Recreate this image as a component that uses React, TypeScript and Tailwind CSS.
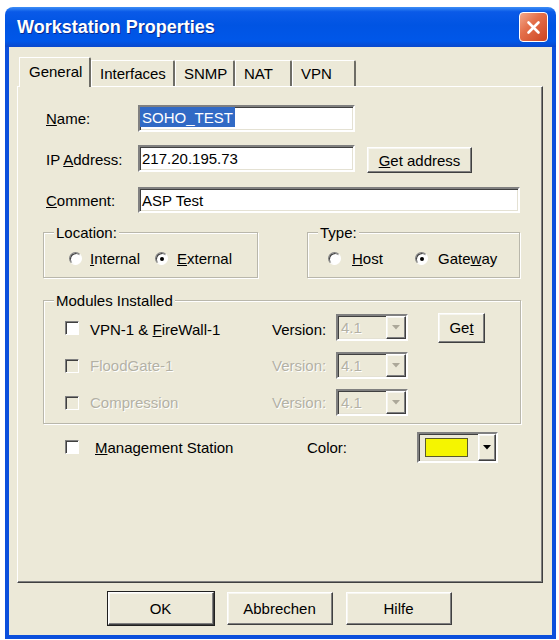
import React from "react";

const sunken =
  "border-2 border-t-[#808080] border-l-[#808080] border-r-white border-b-white shadow-[inset_1px_1px_0_#404040,inset_-1px_-1px_0_#e4e1d3]";
const raised =
  "border border-t-white border-l-white border-r-[#404040] border-b-[#404040] shadow-[inset_-1px_-1px_0_#808080,inset_1px_1px_0_#f7f6f0]";
const disabledText = "text-[#b3b1a5] [text-shadow:1px_1px_0_#ffffff]";

function Radio({ checked }: { checked?: boolean }) {
  return (
    <span className="inline-flex shrink-0 items-center justify-center w-[13px] h-[13px] rounded-full bg-white border border-t-[#808080] border-l-[#808080] border-r-white border-b-white shadow-[inset_1px_1px_0_#404040]">
      {checked && <span className="w-[4px] h-[4px] rounded-full bg-black" />}
    </span>
  );
}

function Check({ disabled }: { disabled?: boolean }) {
  return (
    <span
      className={`inline-block shrink-0 w-[14px] h-[14px] border border-t-[#808080] border-l-[#808080] border-r-white border-b-white shadow-[inset_1px_1px_0_#404040] ${
        disabled ? "bg-[#ECE9D8]" : "bg-white"
      }`}
    />
  );
}

function Arrow({ color }: { color: string }) {
  return (
    <svg width="8" height="5" viewBox="0 0 8 5">
      <polygon points="0,0 8,0 4,4.5" fill={color} />
    </svg>
  );
}

function VersionCombo() {
  return (
    <div className={`w-[72px] h-[27px] flex bg-[#ECE9D8] ${sunken}`}>
      <span className={`flex-1 flex items-center pl-[3px] ${disabledText}`}>4.1</span>
      <span className={`w-[20px] flex items-center justify-center bg-[#ECE9D8] ${raised}`}>
        <Arrow color="#aca899" />
      </span>
    </div>
  );
}

function Button({
  children,
  className = "",
  isDefault,
}: {
  children: React.ReactNode;
  className?: string;
  isDefault?: boolean;
}) {
  return (
    <div
      className={`flex items-center justify-center bg-[#ECE9D8] ${
        isDefault ? "outline outline-1 outline-[#202020]" : ""
      } ${raised} ${className}`}
    >
      {children}
    </div>
  );
}

function Tab({
  label,
  width,
  selected,
}: {
  label: string;
  width: string;
  selected?: boolean;
}) {
  return (
    <div
      className={`${width} flex items-center pl-[8px] bg-[#ECE9D8] rounded-tr-[2px] border-t border-l border-t-white border-l-white border-r-2 border-r-[#6e6d66] ${
        selected ? "h-[30px] -mb-[1px] relative z-10 pl-[9px] pb-[2px]" : "h-[26px]"
      }`}
    >
      {label}
    </div>
  );
}

function GroupBox({
  title,
  className = "",
  children,
}: {
  title: string;
  className?: string;
  children: React.ReactNode;
}) {
  return (
    <div
      className={`flex flex-col border border-[#b9b7ab] shadow-[inset_1px_1px_0_#ffffff,1px_1px_0_#ffffff] ${className}`}
    >
      <span className="-mt-[9px] ml-[10px] px-[2px] w-fit h-[17px] leading-[17px] bg-[#ECE9D8]">
        {title}
      </span>
      {children}
    </div>
  );
}

export default function App() {
  return (
    <div className="w-[559px] h-[640px] bg-white pt-[7px] pl-[5px] [font-family:'Liberation_Sans',Arial,sans-serif] text-[15px] leading-none text-black">
      <div className="w-[551px] h-[632px] flex flex-col rounded-t-[8px] overflow-hidden">
        {/* title bar */}
        <div className="h-[40px] shrink-0 flex items-center justify-between pl-[12px] pr-[8px] bg-[linear-gradient(180deg,#3d8ef6_0%,#0a5ae8_12%,#0054e3_45%,#0057e9_85%,#0a48cc_100%)]">
          <span className="text-white font-bold text-[18px] [text-shadow:1px_1px_0_#0b2b8f]">
            Workstation Properties
          </span>
          <div className="w-[29px] h-[30px] rounded-[4px] border border-white bg-[linear-gradient(135deg,#f3a98c_0%,#e4704b_40%,#cc4320_100%)] flex items-center justify-center shadow-[0_0_1px_#0a3a9a]">
            <svg width="15" height="15" viewBox="0 0 15 15">
              <path d="M2.5 2.5 L12.5 12.5 M12.5 2.5 L2.5 12.5" stroke="white" strokeWidth="2.6" strokeLinecap="round" />
            </svg>
          </div>
        </div>

        {/* dialog body */}
        <div className="flex-1 flex flex-col bg-[#ECE9D8] border-x-4 border-b-4 border-[#0b4fdc] pt-[10px]">
          {/* tabs */}
          <div className="flex items-end h-[29px] pl-[10px]">
            <Tab label="General" width="w-[72px]" selected />
            <Tab label="Interfaces" width="w-[84px]" />
            <Tab label="SNMP" width="w-[60px]" />
            <Tab label="NAT" width="w-[57px]" />
            <Tab label="VPN" width="w-[64px]" />
          </div>

          {/* tab page */}
          <div className="ml-[8px] w-[526px] h-[497px] flex flex-col pt-[18px] pl-[25px] border border-t-white border-l-white border-r-[#404040] border-b-[#404040] shadow-[inset_-1px_-1px_0_#808080]">
            <div className="flex items-center h-[27px] ml-[3px]">
              <span className="w-[92px]">
                <u>N</u>ame:
              </span>
              <div className={`w-[217px] h-[27px] bg-white flex items-start ${sunken}`}>
                <span className="h-[20px] px-[2px] flex items-center bg-[#316ac5] text-white">SOHO_TEST</span>
              </div>
            </div>

            <div className="flex h-[28px] mt-[13px] ml-[3px]">
              <span className="w-[92px] self-center">
                IP <u>A</u>ddress:
              </span>
              <div className={`w-[217px] h-[27px] bg-white flex items-center pl-[2px] ${sunken}`}>
                217.20.195.73
              </div>
              <Button className="ml-[12px] w-[105px] h-[26px] self-end">
                <span>
                  <u>G</u>et address
                </span>
              </Button>
            </div>

            <div className="flex items-center h-[26px] mt-[14px] ml-[3px]">
              <span className="w-[92px]">
                <u>C</u>omment:
              </span>
              <div className={`w-[382px] h-[26px] bg-white flex items-center pl-[2px] ${sunken}`}>
                ASP Test
              </div>
            </div>

            <div className="flex mt-[19px]">
              <GroupBox title="Location:" className="w-[215px] h-[46px]">
                <div className="flex items-center h-[17px] mt-[9px] ml-[25px]">
                  <span className="w-[86px] flex items-center">
                    <Radio />
                    <span className="ml-[8px]">
                      <u>I</u>nternal
                    </span>
                  </span>
                  <span className="flex items-center">
                    <Radio checked />
                    <span className="ml-[9px]">
                      <u>E</u>xternal
                    </span>
                  </span>
                </div>
              </GroupBox>
              <GroupBox title="Type:" className="ml-[49px] w-[213px] h-[46px]">
                <div className="flex items-center h-[17px] mt-[9px] ml-[20px]">
                  <span className="w-[87px] flex items-center">
                    <Radio />
                    <span className="ml-[11px]">
                      <u>H</u>ost
                    </span>
                  </span>
                  <span className="flex items-center">
                    <Radio checked />
                    <span className="ml-[10px]">
                      Gate<u>w</u>ay
                    </span>
                  </span>
                </div>
              </GroupBox>
            </div>

            <GroupBox title="Modules Installed" className="mt-[22px] w-[478px] h-[124px]">
              <div className="flex items-center h-[27px] mt-[5px] ml-[21px]">
                <Check />
                <span className="ml-[11px] w-[182px] pt-[4px]">
                  VPN-1 &amp; <u>F</u>ireWall-1
                </span>
                <span className="w-[64px] pt-[4px]">Version:</span>
                <VersionCombo />
                <Button className="ml-[30px] w-[47px] h-[30px]">
                  <span>
                    Ge<u>t</u>
                  </span>
                </Button>
              </div>
              <div className="flex items-center h-[27px] mt-[11px] ml-[21px]">
                <Check disabled />
                <span className={`ml-[11px] w-[182px] ${disabledText}`}>FloodGate-1</span>
                <span className={`w-[64px] ${disabledText}`}>Version:</span>
                <VersionCombo />
              </div>
              <div className="flex items-center h-[27px] mt-[10px] ml-[21px]">
                <Check disabled />
                <span className={`ml-[11px] w-[182px] ${disabledText}`}>Compression</span>
                <span className={`w-[64px] ${disabledText}`}>Version:</span>
                <VersionCombo />
              </div>
            </GroupBox>

            <div className="flex items-center h-[31px] mt-[8px]">
              <span className="ml-[22px]">
                <Check />
              </span>
              <span className="ml-[16px] w-[212px]">
                <u>M</u>anagement Station
              </span>
              <span className="w-[110px]">Color:</span>
              <div className={`w-[81px] h-[31px] flex bg-[#ECE9D8] ${sunken}`}>
                <span className="flex-1 flex items-center pl-[6px]">
                  <span className="w-[43px] h-[19px] bg-[#f5f500] border border-[#5a5a2a]" />
                </span>
                <span className={`w-[18px] flex items-center justify-center ${raised}`}>
                  <Arrow color="#000000" />
                </span>
              </div>
            </div>
          </div>

          {/* dialog buttons */}
          <div className="flex justify-center gap-[13px] mt-[9px] pr-[2px]">
            <Button isDefault className="w-[106px] h-[33px]">
              OK
            </Button>
            <Button className="w-[106px] h-[33px]">Abbrechen</Button>
            <Button className="w-[106px] h-[33px]">Hilfe</Button>
          </div>
        </div>
      </div>
    </div>
  );
}
